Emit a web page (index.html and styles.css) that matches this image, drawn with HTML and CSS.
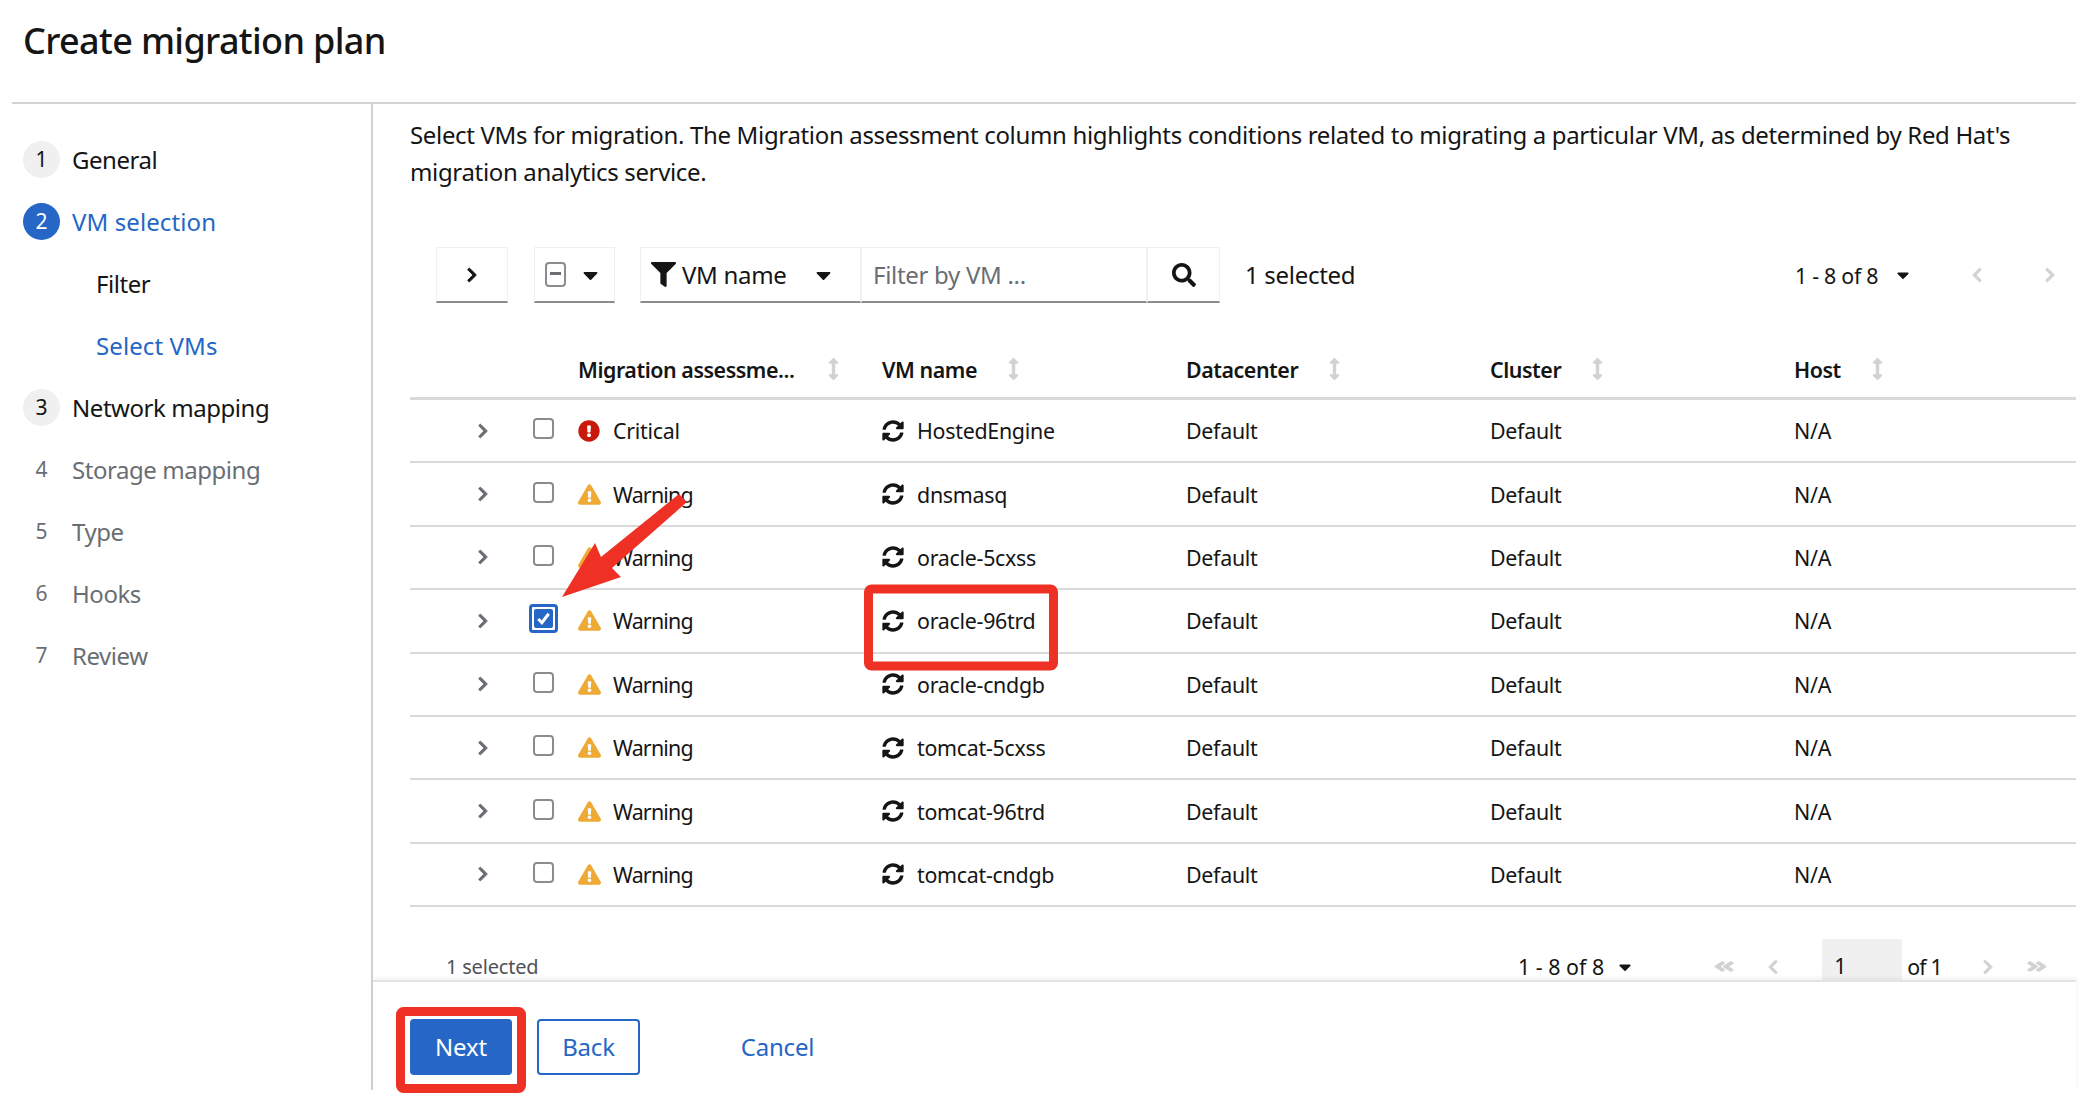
FILE: index.html
```html
<!DOCTYPE html>
<html lang="en">
<head>
<meta charset="utf-8">
<title>Create migration plan</title>
<link rel="stylesheet" href="styles.css">
</head>
<body>
<svg class="defs" width="0" height="0" aria-hidden="true">
<symbol id="i-right" viewBox="0 0 320 512"><path d="M285.476 272.971L91.132 467.314c-9.373 9.373-24.569 9.373-33.941 0l-22.667-22.667c-9.357-9.357-9.375-24.522-.04-33.901L188.505 256 34.484 101.255c-9.335-9.379-9.317-24.544.04-33.901l22.667-22.667c9.373-9.373 24.569-9.373 33.941 0L285.475 239.03c9.373 9.372 9.373 24.568.001 33.941z"/></symbol>
<symbol id="i-dbl" viewBox="0 0 448 512" preserveAspectRatio="none"><path d="M224.3 273l-136 136c-9.4 9.4-24.6 9.4-33.9 0l-22.6-22.6c-9.4-9.4-9.4-24.6 0-33.9l96.4-96.4-96.4-96.4c-9.4-9.4-9.4-24.6 0-33.9L54.3 103c9.4-9.4 24.6-9.4 33.9 0l136 136c9.5 9.4 9.5 24.6.1 34zm192-34l-136-136c-9.4-9.4-24.6-9.4-33.9 0l-22.6 22.6c-9.4 9.4-9.4 24.6 0 33.9l96.4 96.4-96.4 96.4c-9.4 9.4-9.4 24.6 0 33.9l22.6 22.6c9.4 9.4 24.6 9.4 33.9 0l136-136c9.4-9.2 9.4-24.4 0-33.8z"/></symbol>
<symbol id="i-caret" viewBox="0 0 320 512"><path d="M31.3 192h257.3c17.8 0 26.7 21.5 14.1 34.1L174.1 354.8c-7.8 7.8-20.5 7.8-28.3 0L17.2 226.1C4.6 213.5 13.5 192 31.3 192z"/></symbol>
<symbol id="i-filter" viewBox="0 0 512 512"><path d="M487.976 0H24.028C2.71 0-8.047 25.866 7.058 40.971L192 225.941V432c0 7.831 3.821 15.17 10.237 19.662l80 55.98C298.02 518.69 320 507.493 320 487.98V225.941l184.947-184.97C520.021 25.896 509.338 0 487.976 0z"/></symbol>
<symbol id="i-search" viewBox="0 0 512 512"><path d="M505 442.7L405.3 343c-4.5-4.5-10.6-7-17-7H372c27.6-35.3 44-79.7 44-128C416 93.1 322.9 0 208 0S0 93.1 0 208s93.1 208 208 208c48.3 0 92.7-16.4 128-44v16.3c0 6.4 2.5 12.5 7 17l99.7 99.7c9.4 9.4 24.6 9.4 33.9 0l28.3-28.3c9.4-9.4 9.4-24.6.1-34zM208 336c-70.7 0-128-57.2-128-128 0-70.7 57.2-128 128-128 70.7 0 128 57.2 128 128 0 70.7-57.2 128-128 128z"/></symbol>
<symbol id="i-sort" viewBox="0 0 256 512"><path d="M214.059 377.941H168V134.059h46.059c21.382 0 32.09-25.851 16.971-40.971L144.971 7.029c-9.373-9.373-24.569-9.373-33.941 0L24.971 93.088c-15.119 15.119-4.411 40.971 16.971 40.971H88v243.882H41.941c-21.382 0-32.09 25.851-16.971 40.971l86.059 86.059c9.373 9.373 24.569 9.373 33.941 0l86.059-86.059c15.12-15.119 4.412-40.971-16.97-40.971z"/></symbol>
<symbol id="i-sync" viewBox="0 0 512 512"><path d="M370.72 133.28C339.458 104.008 298.888 87.962 255.848 88c-77.458.068-144.328 53.178-162.791 126.85-1.344 5.363-6.122 9.15-11.651 9.15H24.103c-7.498 0-13.194-6.807-11.807-14.176C33.933 94.924 134.813 8 256 8c66.448 0 126.791 26.136 171.315 68.685L463.03 40.97C478.149 25.851 504 36.559 504 57.941V192c0 13.255-10.745 24-24 24H345.941c-21.382 0-32.09-25.851-16.971-40.971l41.75-41.749zM32 296h134.059c21.382 0 32.09 25.851 16.971 40.971l-41.75 41.75c31.262 29.273 71.835 45.319 114.876 45.28 77.418-.07 144.315-53.144 162.787-126.849 1.344-5.363 6.122-9.15 11.651-9.15h57.304c7.498 0 13.194 6.807 11.807 14.176C478.067 417.076 377.187 504 256 504c-66.448 0-126.791-26.136-171.315-68.685L48.97 471.03C33.851 486.149 8 475.441 8 454.059V320c0-13.255 10.745-24 24-24z"/></symbol>
<symbol id="i-crit" viewBox="0 0 512 512"><path d="M504 256c0 136.997-111.043 248-248 248S8 392.997 8 256C8 119.083 119.043 8 256 8s248 111.083 248 248zm-248 50c-25.405 0-46 20.595-46 46s20.595 46 46 46 46-20.595 46-46-20.595-46-46-46zm-43.673-165.346l7.418 136c.347 6.364 5.609 11.346 11.982 11.346h48.546c6.373 0 11.635-4.982 11.982-11.346l7.418-136c.375-6.874-5.098-12.654-11.982-12.654h-63.383c-6.884 0-12.356 5.78-11.981 12.654z"/></symbol>
<symbol id="i-warn" viewBox="0 0 576 512"><path d="M569.517 440.013C587.975 472.007 564.806 512 527.94 512H48.054c-36.937 0-59.999-40.055-41.577-71.987L246.423 23.985c18.467-32.009 64.72-31.951 83.154 0l239.94 416.028zM288 354c-25.405 0-46 20.595-46 46s20.595 46 46 46 46-20.595 46-46-20.595-46-46-46zm-43.673-165.346l7.418 136c.347 6.364 5.609 11.346 11.982 11.346h48.546c6.373 0 11.635-4.982 11.982-11.346l7.418-136c.375-6.874-5.098-12.654-11.982-12.654h-63.383c-6.884 0-12.356 5.78-11.981 12.654z"/></symbol>
</svg>

<div class="page">
  <h1 class="title">Create migration plan</h1>
  <div class="main">
    <nav class="side">
      <div class="step"><span class="num num-done">1</span><span>General</span></div>
      <div class="step step-cur"><span class="num num-cur">2</span><span>VM selection</span></div>
      <div class="step sub">Filter</div>
      <div class="step sub step-cur">Select VMs</div>
      <div class="step"><span class="num num-done">3</span><span>Network mapping</span></div>
      <div class="step step-off"><span class="num">4</span><span>Storage mapping</span></div>
      <div class="step step-off"><span class="num">5</span><span>Type</span></div>
      <div class="step step-off"><span class="num">6</span><span>Hooks</span></div>
      <div class="step step-off"><span class="num">7</span><span>Review</span></div>
    </nav>
    <section class="content">
      <div class="scroll">
        <p class="intro">Select VMs for migration. The Migration assessment column highlights conditions related to migrating a particular VM, as determined by Red Hat's migration analytics service.</p>
        <div class="toolbar">
          <div class="tb-box tb-toggle"><svg class="ic ic-chev-dark"><use href="#i-right"/></svg></div>
          <div class="tb-box tb-bulk"><span class="cb-mini"></span><svg class="ic ic-caret"><use href="#i-caret"/></svg></div>
          <div class="tb-box tb-field"><svg class="ic ic-filter"><use href="#i-filter"/></svg><span class="tb-field-label">VM name</span><svg class="ic ic-caret"><use href="#i-caret"/></svg></div>
          <div class="tb-box tb-input">Filter by VM ...</div>
          <div class="tb-box tb-search"><svg class="ic ic-search"><use href="#i-search"/></svg></div>
          <span class="tb-count">1 selected</span>
          <div class="tb-pager">
            <span class="pg-range">1 - 8 <span class="pg-of">of</span> 8</span><svg class="ic ic-caret-sm"><use href="#i-caret"/></svg>
            <svg class="ic ic-off ic-left"><use href="#i-right"/></svg>
            <svg class="ic ic-off"><use href="#i-right"/></svg>
          </div>
        </div>
        <div class="table">
          <div class="row row-head">
            <div></div><div></div>
            <div class="th th-wide"><span>Migration assessme...</span><svg class="ic ic-sort"><use href="#i-sort"/></svg></div>
            <div class="th"><span>VM name</span><svg class="ic ic-sort"><use href="#i-sort"/></svg></div>
            <div class="th"><span>Datacenter</span><svg class="ic ic-sort"><use href="#i-sort"/></svg></div>
            <div class="th"><span>Cluster</span><svg class="ic ic-sort"><use href="#i-sort"/></svg></div>
            <div class="th"><span>Host</span><svg class="ic ic-sort"><use href="#i-sort"/></svg></div>
          </div>
          <div class="row">
            <div class="td-exp"><svg class="ic ic-exp"><use href="#i-right"/></svg></div><div class="td-cb"><span class="cb"></span></div>
            <div class="td"><svg class="ic ic-crit"><use href="#i-crit"/></svg>Critical</div>
            <div class="td"><svg class="ic ic-sync"><use href="#i-sync"/></svg>HostedEngine</div>
            <div class="td">Default</div><div class="td">Default</div><div class="td">N/A</div>
          </div>
          <div class="row">
            <div class="td-exp"><svg class="ic ic-exp"><use href="#i-right"/></svg></div><div class="td-cb"><span class="cb"></span></div>
            <div class="td td-warn"><svg class="ic ic-warn"><use href="#i-warn"/></svg>Warning</div>
            <div class="td"><svg class="ic ic-sync"><use href="#i-sync"/></svg>dnsmasq</div>
            <div class="td">Default</div><div class="td">Default</div><div class="td">N/A</div>
          </div>
          <div class="row">
            <div class="td-exp"><svg class="ic ic-exp"><use href="#i-right"/></svg></div><div class="td-cb"><span class="cb"></span></div>
            <div class="td td-warn"><svg class="ic ic-warn"><use href="#i-warn"/></svg>Warning</div>
            <div class="td"><svg class="ic ic-sync"><use href="#i-sync"/></svg>oracle-5cxss</div>
            <div class="td">Default</div><div class="td">Default</div><div class="td">N/A</div>
          </div>
          <div class="row">
            <div class="td-exp"><svg class="ic ic-exp"><use href="#i-right"/></svg></div><div class="td-cb"><span class="cb-on"><svg class="cb-check" viewBox="0 0 20 20"><path d="M4.5 10.5l3.8 4L15.5 5"/></svg></span></div>
            <div class="td td-warn"><svg class="ic ic-warn"><use href="#i-warn"/></svg>Warning</div>
            <div class="td"><svg class="ic ic-sync"><use href="#i-sync"/></svg>oracle-96trd</div>
            <div class="td">Default</div><div class="td">Default</div><div class="td">N/A</div>
          </div>
          <div class="row">
            <div class="td-exp"><svg class="ic ic-exp"><use href="#i-right"/></svg></div><div class="td-cb"><span class="cb"></span></div>
            <div class="td td-warn"><svg class="ic ic-warn"><use href="#i-warn"/></svg>Warning</div>
            <div class="td"><svg class="ic ic-sync"><use href="#i-sync"/></svg>oracle-cndgb</div>
            <div class="td">Default</div><div class="td">Default</div><div class="td">N/A</div>
          </div>
          <div class="row">
            <div class="td-exp"><svg class="ic ic-exp"><use href="#i-right"/></svg></div><div class="td-cb"><span class="cb"></span></div>
            <div class="td td-warn"><svg class="ic ic-warn"><use href="#i-warn"/></svg>Warning</div>
            <div class="td"><svg class="ic ic-sync"><use href="#i-sync"/></svg>tomcat-5cxss</div>
            <div class="td">Default</div><div class="td">Default</div><div class="td">N/A</div>
          </div>
          <div class="row">
            <div class="td-exp"><svg class="ic ic-exp"><use href="#i-right"/></svg></div><div class="td-cb"><span class="cb"></span></div>
            <div class="td td-warn"><svg class="ic ic-warn"><use href="#i-warn"/></svg>Warning</div>
            <div class="td"><svg class="ic ic-sync"><use href="#i-sync"/></svg>tomcat-96trd</div>
            <div class="td">Default</div><div class="td">Default</div><div class="td">N/A</div>
          </div>
          <div class="row">
            <div class="td-exp"><svg class="ic ic-exp"><use href="#i-right"/></svg></div><div class="td-cb"><span class="cb"></span></div>
            <div class="td td-warn"><svg class="ic ic-warn"><use href="#i-warn"/></svg>Warning</div>
            <div class="td"><svg class="ic ic-sync"><use href="#i-sync"/></svg>tomcat-cndgb</div>
            <div class="td">Default</div><div class="td">Default</div><div class="td">N/A</div>
          </div>
        </div>
        <div class="tfoot">
          <span class="tf-count">1 selected</span>
          <span class="pg-range tf-range">1 - 8 of 8</span><svg class="ic ic-caret-sm"><use href="#i-caret"/></svg>
          <svg class="ic ic-dbl ic-left tf-first"><use href="#i-dbl"/></svg>
          <svg class="ic ic-off ic-left tf-prev"><use href="#i-right"/></svg>
          <span class="tf-page">1</span>
          <span class="tf-of">of 1</span>
          <svg class="ic ic-off tf-next"><use href="#i-right"/></svg>
          <svg class="ic ic-dbl tf-last"><use href="#i-dbl"/></svg>
        </div>
      </div>
      <footer class="actions">
        <button class="btn btn-primary">Next</button>
        <button class="btn btn-secondary">Back</button>
        <button class="btn btn-link">Cancel</button>
      </footer>
    </section>
  </div>
</div>

<svg class="marks" viewBox="0 0 2094 1112" aria-hidden="true">
  <rect class="mark-box" x="868.5" y="589" width="185" height="77" rx="3"/>
  <rect class="mark-box" x="400.5" y="1011.5" width="121" height="77" rx="3"/>
  <polygon class="mark-fill" points="679,494 687,502 612,568 621,577 562,597 595,543 601,557"/>
</svg>
</body>
</html>
```
FILE: styles.css
```css
* { box-sizing: border-box; }
html, body { margin: 0; padding: 0; background: #fff; }
body {
  width: 2094px;
  height: 1112px;
  overflow: hidden;
  position: relative;
  font-family: "Noto Sans", "Liberation Sans", sans-serif;
  color: #151515;
}
.defs { position: absolute; }
.page { width: 2064px; height: 1090px; margin-left: 12px; display: flex; flex-direction: column; }
.title {
  margin: 0;
  height: 104px;
  padding: 20px 0 0 11px;
  font-size: 36px;
  line-height: 42px;
  font-weight: 500;
  letter-spacing: -0.65px;
  color: #151515;
  border-bottom: 2px solid #d2d2d2;
  flex: none;
}
.main { flex: 1; display: flex; min-height: 0; }
.side {
  width: 361px;
  flex: none;
  border-right: 2px solid #d2d2d2;
  padding: 24px 0 0 11px;
  font-size: 24px;
  letter-spacing: -0.45px;
  color: #151515;
}
.step { height: 62px; display: flex; align-items: center; gap: 12px; }
.num {
  width: 37px;
  height: 37px;
  border-radius: 50%;
  display: flex;
  align-items: center;
  justify-content: center;
  font-size: 21px;
  letter-spacing: 0;
  color: #6a6e73;
  flex: none;
}
.num-done { background: #f0f0f0; color: #151515; }
.num-cur { background: #2566c6; color: #fff; }
.step-cur { color: #2566c6; letter-spacing: 0.1px; }
.step-off { color: #6a6e73; }
.sub { padding-left: 73px; }

.content { flex: 1; min-width: 0; display: flex; flex-direction: column; }
.scroll { flex: 1; min-height: 0; overflow: hidden; padding-left: 37px; }
.intro {
  margin: 12px 0 57px;
  font-size: 24px;
  line-height: 37px;
  letter-spacing: -0.34px;
  color: #151515;
  width: 1650px;
}
.toolbar { display: flex; align-items: stretch; height: 56px; margin-left: 26px; font-size: 24px; letter-spacing: -0.3px; }
.tb-box {
  border: 1px solid #f0f0f0;
  border-bottom: 2px solid #8a8d90;
  display: flex;
  align-items: center;
  flex: none;
}
.tb-toggle { width: 72px; justify-content: center; }
.tb-bulk { width: 81px; margin-left: 26px; padding-left: 10px; gap: 17px; }
.tb-field { width: 221px; margin-left: 25px; padding-left: 10px; }
.tb-field-label { margin-left: 6px; width: 134px; }
.tb-input { width: 286px; padding-left: 11px; color: #6a6e73; }
.tb-search { width: 73px; justify-content: center; }
.tb-count { align-self: center; margin: 0 0 2px 25px; }
.tb-pager { margin-left: auto; width: 281px; display: flex; align-items: center; align-self: center; }
.tb-pager .ic-caret-sm { margin-left: 19px; }
.tb-pager .ic-off { margin-left: 63px; }
.tb-pager .ic-off + .ic-off { margin-left: 63px; }
.pg-range { font-size: 21.4px; }

.ic { display: block; flex: none; fill: currentColor; }
.ic-left { transform: scaleX(-1); }
.ic-chev-dark { width: 10px; height: 16px; color: #151515; stroke: currentColor; stroke-width: 30; }
.ic-caret { width: 15px; height: 24px; color: #151515; }
.ic-caret-sm { width: 12px; height: 20px; color: #151515; }
.ic-filter { width: 25px; height: 25px; color: #151515; }
.ic-search { width: 24px; height: 24px; color: #151515; }
.ic-off { width: 10px; height: 16px; color: #d2d2d2; stroke: currentColor; stroke-width: 30; }
.ic-sort { width: 11px; height: 22px; color: #d2d2d2; }
.ic-exp { width: 10px; height: 16px; color: #6a6e73; stroke: currentColor; stroke-width: 30; }
.ic-crit { width: 22px; height: 22px; color: #c9190b; margin-right: 13px; }
.ic-warn { width: 23px; height: 21px; color: #eeaa35; margin-right: 12px; }
.ic-sync { width: 22px; height: 22px; color: #151515; margin-right: 13px; }
.ic-dbl { width: 20px; height: 15px; color: #d2d2d2; stroke: currentColor; stroke-width: 30; }

.cb-mini {
  width: 21px;
  height: 25px;
  border: 2px solid #8a8d90;
  border-radius: 4px;
  position: relative;
  display: block;
}
.cb-mini::after {
  content: "";
  position: absolute;
  left: 3px;
  right: 3px;
  top: 8px;
  height: 3px;
  background: #6a6e73;
}
.table { margin-top: 37px; font-size: 21.4px; }
.row {
  display: grid;
  grid-template-columns: 124px 44px repeat(4, 304px) 1fr;
  height: 63.4px;
  align-items: center;
  border-bottom: 2px solid #d9d9d9;
}
.row-head { height: 60px; font-weight: 600; border-bottom-width: 3px; letter-spacing: -0.45px; }
.th { display: flex; align-items: center; gap: 31px; }
.th-wide { gap: 34px; }
.th span { padding-top: 2px; }
.td { display: flex; align-items: center; color: #151515; letter-spacing: -0.28px; }
.td-warn { letter-spacing: -0.8px; }
.td-exp { padding-left: 68px; }
.td-cb { display: flex; margin-bottom: 4px; }
.cb {
  display: block;
  width: 21px;
  height: 21px;
  margin-left: -1px;
  border: 2px solid #8a8d90;
  border-radius: 4px;
}
.cb-on {
  display: block;
  width: 29px;
  height: 29px;
  margin-left: -5px;
  padding: 2px;
  background: #fff;
  border: 3px solid #2566c6;
  border-radius: 4px;
}
.cb-check { display: block; width: 19px; height: 19px; background: #2566c6; border-radius: 2px; fill: none; stroke: #fff; stroke-width: 3.2; }

.tfoot { height: 43px; margin-top: 31.8px; display: flex; align-items: center; position: relative; font-size: 21.4px; }
.tf-count { margin-left: 36px; color: #4f5255; width: 1072px; padding-top: 13px; font-size: 20px; letter-spacing: -0.2px; }
.tf-range { padding-top: 13px; }
.tfoot .ic-caret-sm { margin-left: 15px; margin-top: 13px; }
.tf-first { margin-left: 83px; margin-top: 13px; }
.tf-prev { margin-left: 34px; margin-top: 13px; }
.tf-page {
  margin-left: 44px;
  width: 80px;
  height: 43px;
  background: #f0f0f0;
  padding: 11px 0 0 12px;
  line-height: 32px;
}
.tf-of { margin-left: 5px; padding-top: 13px; letter-spacing: -0.8px; }
.tf-next { margin-left: 41px; margin-top: 13px; }
.tf-last { margin-left: 34px; margin-top: 13px; }

.actions {
  height: 110px;
  flex: none;
  border-top: 2px solid #e4e4e4;
  box-shadow: 0 -2px 4px rgba(0, 0, 0, 0.06);
  position: relative;
  padding: 37px 0 0 37px;
  display: flex;
  align-items: flex-start;
  background: #fff;
}
.btn {
  height: 56px;
  font-family: inherit;
  font-size: 24px;
  letter-spacing: -0.2px;
  border-radius: 4px;
  background: none;
  border: 0;
  padding: 0 0 2px;
}
.btn-primary { width: 102px; background: #2566c6; color: #fff; }
.btn-secondary { width: 103px; margin-left: 25px; border: 2px solid #2566c6; color: #2566c6; }
.btn-link { width: 75px; margin-left: 100px; color: #2566c6; }

.marks { position: absolute; left: 0; top: 0; width: 2094px; height: 1112px; pointer-events: none; }
.mark-box { fill: none; stroke: #ee3124; stroke-width: 9; }
.mark-fill { fill: #ee3124; }
```
